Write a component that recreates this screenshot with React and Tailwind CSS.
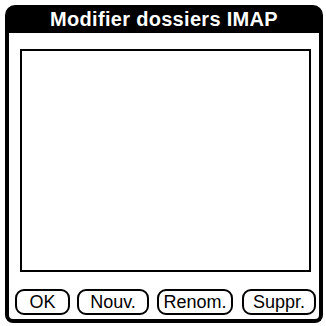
export default function App() {
  const buttons = [
    { label: 'OK', w: 'w-[55px]', ml: 'ml-[6px]' },
    { label: 'Nouv.', w: 'w-[72px]', ml: 'ml-[7px]' },
    { label: 'Renom.', w: 'w-[76px]', ml: 'ml-[8px]' },
    { label: 'Suppr.', w: 'w-[74px]', ml: 'ml-[9px]' },
  ];

  return (
    <div className="w-[326px] h-[326px] bg-white pt-[5px] pl-[5px]" style={{ fontFamily: '"Liberation Sans", Arial, sans-serif' }}>
      <div className="w-[318px] h-[318px] flex flex-col">
        {/* Title bar */}
        <div className="h-[28px] bg-black rounded-t-[10px] flex items-center justify-center">
          <span className="text-white font-bold text-[20px] leading-none tracking-[0.3px]">Modifier dossiers IMAP</span>
        </div>

        {/* Body */}
        <div className="flex-1 border-x-[4px] border-b-[4px] border-black rounded-b-[8px] flex flex-col">
          <div className="ml-[11px] mt-[16px] w-[291px] h-[223px] border-[2px] border-black bg-white" />

          <div className="flex mt-[17px]">
            {buttons.map((b) => (
              <div
                key={b.label}
                className={`${b.w} ${b.ml} h-[26px] border-[2px] border-black rounded-[9px] flex items-center justify-center text-[18px] leading-none text-black`}
              >
                {b.label}
              </div>
            ))}
          </div>
        </div>
      </div>
    </div>
  );
}
